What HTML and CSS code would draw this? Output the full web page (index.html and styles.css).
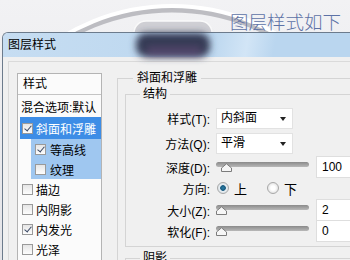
FILE: index.html
```html
<!DOCTYPE html>
<html>
<head>
<meta charset="utf-8">
<title>图层样式</title>
<link rel="stylesheet" href="styles.css">
</head>
<body>

<svg class="deco-back" width="350" height="60" viewBox="0 0 350 60">
  <ellipse cx="172" cy="227" rx="214" ry="218" fill="none" stroke="#bdbdc2" stroke-width="7"/>
  <ellipse cx="172" cy="224" rx="214" ry="218" fill="none" stroke="#ffffff" stroke-width="4"/>
  <rect x="134" y="21" width="78" height="26" rx="12" fill="#cfcfd4" stroke="#fafafa" stroke-width="1.5"/>
</svg>

<div class="caption">图层样式如下</div>

<div class="dialog">
  <div class="titlebar">图层样式</div>
  <div class="dialog-body">
    <div class="frame">

      <div class="style-list">
        <div class="list-head">样式</div>
        <div class="row plain">混合选项:默认</div>
        <div class="row active"><span class="cb on"></span>斜面和浮雕</div>
        <div class="row sub"><span class="cb on"></span>等高线</div>
        <div class="row sub"><span class="cb"></span>纹理</div>
        <div class="row"><span class="cb"></span>描边</div>
        <div class="row"><span class="cb"></span>内阴影</div>
        <div class="row"><span class="cb on"></span>内发光</div>
        <div class="row"><span class="cb"></span>光泽</div>
      </div>

      <div class="panel">
        <fieldset class="group">
          <legend>斜面和浮雕</legend>
          <fieldset class="group inner">
            <legend>结构</legend>
            <div class="form">
              <div class="field">
                <span class="label">样式(T):</span>
                <span class="select">内斜面<i class="arrow"></i></span>
              </div>
              <div class="field">
                <span class="label">方法(Q):</span>
                <span class="select">平滑<i class="arrow"></i></span>
              </div>
              <div class="field depth">
                <span class="label">深度(D):</span>
                <span class="slider">
                  <svg class="thumb" style="left: 5px" width="11" height="9" viewBox="0 0 11 9"><path d="M0.5 8.5 V5 L5.5 0.8 L10.5 5 V8.5 Z" fill="#f6f6f6" stroke="#7c7c7c"/></svg>
                </span>
                <span class="num">100</span>
              </div>
              <div class="field dir">
                <span class="label">方向:</span>
                <span class="radio on"></span><span class="opt">上</span>
                <span class="radio"></span><span class="opt">下</span>
              </div>
              <div class="field size">
                <span class="label">大小(Z):</span>
                <span class="slider">
                  <svg class="thumb" style="left: 0px" width="11" height="9" viewBox="0 0 11 9"><path d="M0.5 8.5 V5 L5.5 0.8 L10.5 5 V8.5 Z" fill="#f6f6f6" stroke="#7c7c7c"/></svg>
                </span>
                <span class="num">2</span>
              </div>
              <div class="field soft">
                <span class="label">软化(F):</span>
                <span class="slider">
                  <svg class="thumb" style="left: 0px" width="11" height="9" viewBox="0 0 11 9"><path d="M0.5 8.5 V5 L5.5 0.8 L10.5 5 V8.5 Z" fill="#f6f6f6" stroke="#7c7c7c"/></svg>
                </span>
                <span class="num">0</span>
              </div>
            </div>
          </fieldset>
          <fieldset class="group inner">
            <legend>阴影</legend>
          </fieldset>
        </fieldset>
      </div>

    </div>
  </div>
</div>

<svg class="deco-front" width="350" height="70" viewBox="0 0 350 70">
  <defs>
    <filter id="blur" x="-30%" y="-60%" width="160%" height="220%">
      <feGaussianBlur stdDeviation="3.5"/>
    </filter>
  </defs>
  <rect x="136" y="33" width="74" height="24" rx="10" fill="#343a55" filter="url(#blur)"/>
  <rect x="146" y="46" width="56" height="10" rx="5" fill="#6b4d7c" opacity="0.5" filter="url(#blur)"/>
</svg>

</body>
</html>
```

FILE: styles.css
```css
body {
   margin: 0;
   width: 350px;
   height: 260px;
   overflow: hidden;
   position: relative;
   background: linear-gradient(#f2f2f4, #e4e4e8);
   font-family: "Liberation Sans", "Noto Sans CJK SC", sans-serif;
   font-size: 12px;
   color: #000;
}

.deco-back {
   position: absolute;
   left: 0;
   top: 0;
}

.deco-front {
   position: absolute;
   left: 0;
   top: 0;
   pointer-events: none;
}

.caption {
   position: relative;
   height: 23px;
   padding: 9px 9px 0 0;
   text-align: right;
   font-family: "Noto Sans CJK SC", sans-serif;
   font-size: 18.5px;
   font-weight: 300;
   line-height: 24px;
   color: #5d72a6;
}

.dialog {
   position: relative;
   margin-left: 2px;
   border-left: 1px solid #6c7b8c;
   border-top: 1px solid #6c7b8c;
   border-top-left-radius: 6px;
   background: #f0f0f0;
}

.titlebar {
   height: 24px;
   line-height: 24px;
   padding-left: 5px;
   border-top-left-radius: 5px;
   background: linear-gradient(100deg, #c6ddf2 0%, #bcd7ef 60%, #d2e5f6 70%, #bad6ef 78%);
}

.dialog-body {
   padding: 4px 0 0 5px;
   background: #f0f0f0;
}

.frame {
   display: flex;
   gap: 15px;
   height: 200px;
   padding: 11px 0 0 8px;
   border-top: 1px solid #dadada;
   border-left: 1px solid #dadada;
}

/* left column */

.style-list {
   width: 83px;
   flex: none;
   border: 1px solid #b4b4b4;
   border-bottom: none;
   background: #fbfbfb;
}

.list-head {
   height: 20px;
   line-height: 20px;
   padding-left: 5px;
   border-bottom: 1px solid #c4c4c4;
}

.row {
   display: flex;
   align-items: center;
   gap: 3px;
   height: 20px;
   margin-left: 2px;
   padding-left: 2px;
   white-space: nowrap;
}

.row.plain {
   height: 22px;
   padding-left: 1px;
}

.row.active {
   height: 22px;
   background: #3d8de6;
   color: #fff;
}

.row.sub {
   margin-left: 13px;
   padding-left: 4px;
   gap: 4px;
   background: #9fc7f0;
}

.cb {
   position: relative;
   width: 9px;
   height: 9px;
   flex: none;
   border: 1px solid #9a9a9a;
   background: linear-gradient(#e6e6e6, #fdfdfd);
}

.cb.on::after {
   content: "";
   position: absolute;
   left: 3px;
   top: 0px;
   width: 3px;
   height: 6px;
   border-right: 1.5px solid #3b4a66;
   border-bottom: 1.5px solid #3b4a66;
   transform: rotate(40deg);
}

/* right column */

.panel {
   flex: 1;
   margin-top: -3px;
}

.group {
   margin: 0;
   padding: 0 0 0 7px;
   border: 1px solid #d4d4d4;
   border-right: none;
   border-bottom: none;
}

.group > legend {
   margin-left: 8px;
   padding: 0 4px;
   line-height: 16px;
}

.group.inner {
   padding: 0;
   border-bottom: 1px solid #d4d4d4;
}

.group.inner > legend {
   margin-left: 14px;
   padding: 0 3px;
}

.group.inner + .group.inner {
   margin-top: 3px;
   border-bottom: none;
}

.form {
   display: flex;
   flex-direction: column;
   padding: 6px 0 5px;
}

.field {
   display: flex;
   align-items: center;
   gap: 6px;
   height: 21px;
}

.field + .field {
   margin-top: 4px;
}

.field.depth {
   height: 22px;
   margin-top: 2px;
}

.field.dir {
   height: 20px;
   margin-top: 0;
   gap: 0;
}

.field.size {
   height: 20px;
   margin-top: 2px;
}

.field.soft {
   height: 20px;
   margin-top: 1px;
}

.label {
   width: 84px;
   flex: none;
   text-align: right;
}

.field.dir .label {
   margin-right: 6px;
}

.select {
   position: relative;
   width: 71px;
   height: 19px;
   line-height: 19px;
   padding-left: 4px;
   border: 1px solid #e2e2e2;
   background: #fff;
}

.arrow {
   position: absolute;
   right: 6px;
   top: 8px;
   border-left: 3.5px solid transparent;
   border-right: 3.5px solid transparent;
   border-top: 4px solid #222;
}

.slider {
   position: relative;
   width: 93px;
   height: 5px;
   margin-top: -6px;
   border-radius: 3px;
   background: linear-gradient(#8a8a8a, #b8b8b8);
}

.thumb {
   position: absolute;
   top: 1px;
   display: block;
}

.num {
   width: 40px;
   height: 20px;
   line-height: 20px;
   margin-left: 1px;
   padding-left: 5px;
   border: 1px solid #dedede;
   background: #fff;
}

.radio {
   width: 10px;
   height: 10px;
   flex: none;
   border: 1px solid #a8a8a8;
   border-radius: 50%;
   background: radial-gradient(circle, #ffffff 30%, #e6e6e6 70%);
}

.radio.on {
   margin-left: 1px;
   background: radial-gradient(circle, #2b7fa6 0, #195a80 35%, #e8eef2 45%, #d0d8de 100%);
}

.opt {
   margin-left: 5px;
   margin-right: 20px;
   font-size: 13px;
}
```
